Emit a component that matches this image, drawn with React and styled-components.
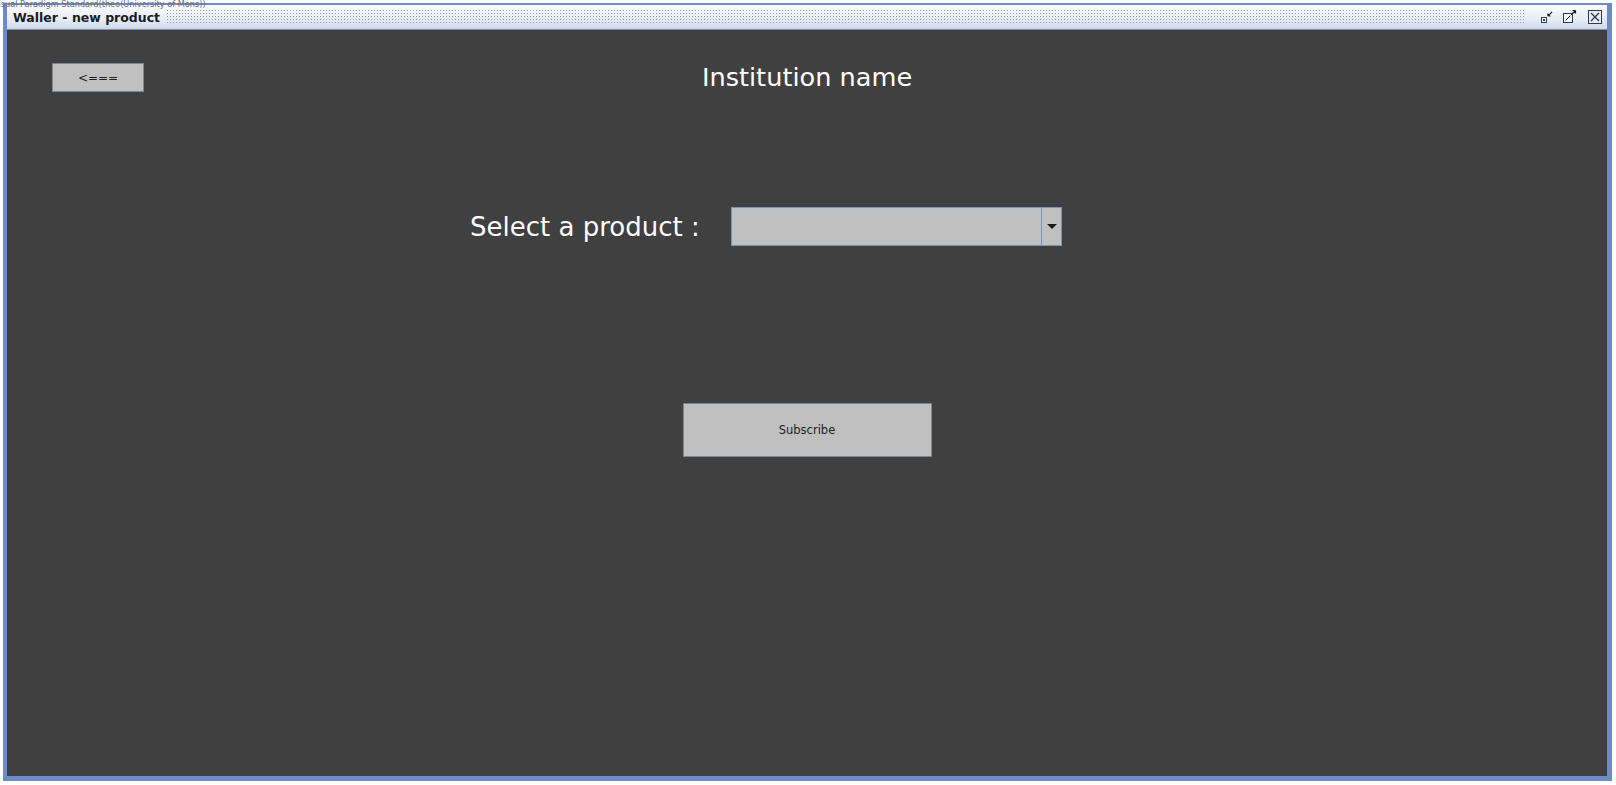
import React from 'react';
import styled, { createGlobalStyle } from 'styled-components';

const Global = createGlobalStyle`
  html, body {
    margin: 0;
    padding: 0;
    background: #ffffff;
    overflow: hidden;
  }
  body {
    font-family: "DejaVu Sans", "Liberation Sans", sans-serif;
  }
`;

const Page = styled.div`
  position: relative;
  width: 1616px;
  height: 785px;
  padding: 3px 0 0 3px;
  box-sizing: border-box;
`;

const Watermark = styled.div`
  position: absolute;
  left: -7px;
  top: 0;
  font-size: 8.2px;
  line-height: 9px;
  color: #6b6b6b;
  white-space: nowrap;
  z-index: 2;
`;

const Frame = styled.div`
  width: 1609px;
  height: 778px;
  box-sizing: border-box;
  display: flex;
  flex-direction: column;
  border-style: solid;
  border-color: #6f8bc6;
  border-width: 2px 5px 5px 4px;
`;

const TitleBar = styled.div`
  height: 24px;
  flex: none;
  display: flex;
  align-items: center;
  padding: 0 4px 0 6px;
  background: linear-gradient(#fbfcfe, #e6ecf5 60%, #cdd8e8);
  border-bottom: 1px solid #7d8ea8;
`;

const WindowTitle = styled.span`
  font-size: 12.5px;
  font-weight: bold;
  color: #1c1c1c;
  white-space: nowrap;
`;

const Dots = styled.div`
  flex: 1;
  height: 16px;
  margin: 0 14px 0 6px;
  background-image: radial-gradient(circle, #959eb0 0.8px, transparent 1px);
  background-size: 3px 3px;
`;

const WinButtons = styled.div`
  display: flex;
  align-items: center;
  gap: 4px;
`;

const WinButton = styled.svg`
  width: 16px;
  height: 16px;
  display: block;
  margin-left: ${p => p.gap || 0}px;
`;

const Content = styled.div`
  flex: 1;
  background: #404040;
  display: flex;
  flex-direction: column;
`;

const Header = styled.div`
  display: grid;
  grid-template-columns: 1fr auto 1fr;
  align-items: start;
  padding: 32px 45px 0;
`;

const GreyButton = styled.button`
  box-sizing: border-box;
  width: ${p => p.w}px;
  height: ${p => p.h}px;
  background: #c0c0c0;
  border: 1px solid #7b8795;
  font-family: "DejaVu Sans", sans-serif;
  font-size: 11.5px;
  color: #1e1e1e;
  padding: 0;
  cursor: pointer;
`;

const BackButton = styled(GreyButton)`
  margin-top: 1px;
  justify-self: start;
  font-size: 12px;
`;

const Heading = styled.h1`
  margin: 0;
  font-size: 25.6px;
  line-height: 30px;
  font-weight: normal;
  color: #ffffff;
`;

const SelectRow = styled.div`
  display: grid;
  grid-template-columns: 261px 331px;
  align-items: center;
  margin-top: 115px;
  padding-left: 463px;
`;

const Label = styled.label`
  font-size: 26px;
  line-height: 30px;
  color: #ffffff;
  white-space: nowrap;
`;

const Combo = styled.div`
  box-sizing: border-box;
  height: 39px;
  display: flex;
  border: 1px solid #7f93ad;
  background: #c0c0c0;
`;

const ComboField = styled.div`
  flex: 1;
  border: 1px solid #b4c4d6;
`;

const ComboArrow = styled.div`
  width: 19px;
  border-left: 1px solid #8192a6;
  display: flex;
  align-items: center;
  justify-content: center;

  &::after {
    content: "";
    border-left: 5px solid transparent;
    border-right: 5px solid transparent;
    border-top: 5px solid #1a1a1a;
  }
`;

const Actions = styled.div`
  display: flex;
  justify-content: center;
  margin-top: 157px;
`;

export default function App() {
  return (
    <Page>
      <Global />
      <Watermark>Visual Paradigm Standard(theo(University of Mons))</Watermark>
      <Frame>
        <TitleBar>
          <WindowTitle>Waller - new product</WindowTitle>
          <Dots />
          <WinButtons>
            <WinButton viewBox="0 0 16 16">
              <rect x="2.5" y="8.5" width="5" height="5" fill="#fff" stroke="#2a3a55" />
              <rect x="4" y="10" width="2" height="2" fill="#2a3a55" />
              <path d="M9 7 L13 3 M9 7 L9 4.5 M9 7 L11.5 7" stroke="#1a1a1a" strokeWidth="1.2" fill="none" />
            </WinButton>
            <WinButton viewBox="0 0 16 16" gap={2}>
              <rect x="2.5" y="4.5" width="9" height="9" fill="#fff" stroke="#2a3a55" />
              <path d="M4.5 11.5 L9.5 6.5" stroke="#2a3a55" />
              <path d="M10 6 L14.5 1.5 M14.5 1.5 L11.5 1.5 M14.5 1.5 L14.5 4.5" stroke="#1a1a1a" strokeWidth="1.2" fill="none" />
            </WinButton>
            <WinButton viewBox="0 0 16 16" gap={6}>
              <rect x="1.5" y="1.5" width="13" height="13" fill="#e8eef7" stroke="#2a3a55" />
              <path d="M4 4 L12 12 M12 4 L4 12" stroke="#2a3a55" strokeWidth="1.3" />
            </WinButton>
          </WinButtons>
        </TitleBar>
        <Content>
          <Header>
            <BackButton w={92} h={29}>&lt;===</BackButton>
            <Heading>Institution name</Heading>
            <span />
          </Header>
          <SelectRow>
            <Label>Select a product :</Label>
            <Combo>
              <ComboField />
              <ComboArrow />
            </Combo>
          </SelectRow>
          <Actions>
            <GreyButton w={249} h={54}>Subscribe</GreyButton>
          </Actions>
        </Content>
      </Frame>
    </Page>
  );
}
